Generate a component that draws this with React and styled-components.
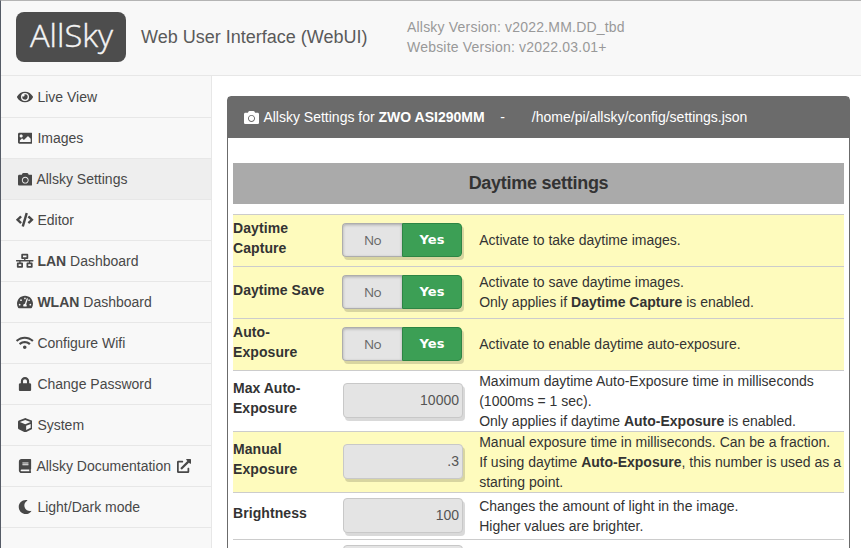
import React from "react";
import styled, { createGlobalStyle } from "styled-components";
import {
  FaEye, FaImage, FaCamera, FaCode, FaNetworkWired, FaTachometerAlt, FaWifi,
  FaLock, FaCube, FaBook, FaMoon, FaExternalLinkAlt,
} from "react-icons/fa";

const GlobalStyle = createGlobalStyle`
  *, *::before, *::after { box-sizing: border-box; }
  html, body { margin: 0; height: 548px; overflow: hidden; background: #fff; }
  body {
    font: 14px/20px "Liberation Sans", Arial, sans-serif;
    color: #333;
  }
`;

const Page = styled.div`
  width: 861px;
  height: 548px;
  overflow: hidden;
  display: flex;
  flex-direction: column;
  border-left: 1px solid #555b66;
  border-top: 1px solid #b4b4b4;
`;

const Header = styled.header`
  flex: 0 0 75px;
  display: flex;
  align-items: flex-start;
  padding-left: 15px;
  background: #f8f8f8;
  border-bottom: 1px solid #e7e7e7;
`;

const Logo = styled.svg`
  width: 110px;
  height: 50px;
  margin-top: 11px;
  display: block;
`;

const Title = styled.div`
  width: 281px;
  padding: 26px 0 0 15px;
  font-size: 18px;
  color: #5a5a5a;
  white-space: nowrap;
`;

const Versions = styled.div`
  padding-top: 16px;
  color: #999;
  letter-spacing: 0.2px;
  white-space: nowrap;
`;

const Body = styled.div`
  flex: 1;
  min-height: 0;
  display: flex;
`;

const Sidebar = styled.nav`
  flex: 0 0 211px;
  padding-top: 1px;
  background: #f8f8f8;
  border-right: 1px solid #e7e7e7;
`;

const NavItem = styled.a`
  display: flex;
  align-items: center;
  height: 41px;
  padding-left: 15px;
  color: #484848;
  background: ${(p) => (p.$active ? "#eee" : "transparent")};
  border-bottom: 1px solid #e7e7e7;
  white-space: nowrap;
  svg { display: block; }
`;

const NavIcon = styled.span`
  width: 18px;
  margin-right: ${(p) => (p.$tight ? 2.4 : 3.4)}px;
  display: flex;
  justify-content: center;
`;

const NavText = styled.span`
  margin-right: 5.6px;
`;

const Main = styled.main`
  flex: 1;
  padding: 20px 11px 0 15px;
`;

const Panel = styled.section`
  width: 623px;
  height: 500px;
  border: 1px solid #6b6b6b;
  border-radius: 4px;
`;

const PanelHeading = styled.div`
  height: 41px;
  display: flex;
  align-items: center;
  padding: 0 0 1px 16px;
  background: #6b6b6b;
  color: #fff;
  white-space: pre;
`;

const HeadingText = styled.span`
  margin-left: ${(p) => p.$gap}px;
`;

const PanelBody = styled.div`
  padding: 25px 5px 0;
`;

const SectionTitle = styled.h2`
  margin: 0 0 10px;
  height: 41px;
  line-height: 40px;
  font-size: 18px;
  letter-spacing: -0.27px;
  text-align: center;
  background: #aaa;
  color: #333;
`;

const Row = styled.div`
  display: grid;
  grid-template-columns: 109px 137px 1fr;
  align-items: center;
  height: ${(p) => p.$height}px;
  border-top: 1px solid #ccc;
  background: ${(p) => (p.$changed ? "#fefbbd" : "#fff")};
`;

const Label = styled.div`
  font-weight: bold;
  letter-spacing: ${(p) => (p.$wide ? 0.02 : 0.08)}px;
  padding-bottom: ${(p) => p.$lift}px;
  white-space: pre-line;
`;

const Description = styled.div`
  padding: 0 0 ${(p) => p.$lift}px 0.2px;
  white-space: nowrap;
`;

const Toggle = styled.div`
  display: flex;
  width: 120px;
  height: 34px;
  margin-bottom: 1px;
  border-radius: 4px;
  box-shadow: 2px 3px 0 rgba(0, 0, 0, 0.15);
  text-align: center;
`;

const ToggleNo = styled.span`
  width: 60px;
  border: 1px solid #adadad;
  border-right: 0;
  border-radius: 4px 0 0 4px;
  background: #e4e4e4;
  color: #666;
  box-shadow: inset 0 1px 3px rgba(0, 0, 0, 0.25);
  font: 13.5px/32px "Open Sans", sans-serif;
  letter-spacing: -0.6px;
`;

const ToggleYes = styled.span`
  width: 60px;
  border: 1px solid #2d8544;
  border-radius: 0 4px 4px 0;
  background: #3c9f55;
  color: #fff;
  font: bold 13px/32px "DejaVu Sans", sans-serif;
`;

const Field = styled.input`
  width: 120px;
  height: 35px;
  margin: 0 0 ${(p) => p.$lift}px 1px;
  padding: 0 3px 2px 8px;
  border: 1px solid #c8c8c8;
  border-radius: 4px;
  outline: none;
  background: #e4e4e4;
  box-shadow: 2px 3px 0 rgba(0, 0, 0, 0.15);
  font: 14px "Liberation Sans", Arial, sans-serif;
  color: #555;
  text-align: right;
`;

const NAV = [
  { icon: FaEye, text: "Live View" },
  { icon: FaImage, text: "Images", size: 14.5 },
  { icon: FaCamera, text: "Allsky Settings", size: 14.5, active: true, tight: true },
  { icon: FaCode, text: "Editor", size: 17.5 },
  { icon: FaNetworkWired, text: <><b>LAN</b> Dashboard</>, size: 17.5 },
  { icon: FaTachometerAlt, text: <><b>WLAN</b> Dashboard</> },
  { icon: FaWifi, text: "Configure Wifi", size: 17.5 },
  { icon: FaLock, text: "Change Password", size: 14 },
  { icon: FaCube, text: "System", size: 14.5 },
  { icon: FaBook, text: "Allsky Documentation", size: 14, tight: true, external: true },
  { icon: FaMoon, text: "Light/Dark mode", size: 14 },
];

const SETTINGS = [
  { label: "Daytime\nCapture", height: 52, changed: true, text: "Activate to take daytime images." },
  {
    label: "Daytime Save", height: 52, changed: true, wide: true,
    text: <>Activate to save daytime images.<br />Only applies if <b>Daytime Capture</b> is enabled.</>,
  },
  { label: "Auto-\nExposure", height: 52, changed: true, text: "Activate to enable daytime auto-exposure." },
  {
    label: "Max Auto-\nExposure", height: 61, value: "10000", wide: true,
    text: <>Maximum daytime Auto-Exposure time in milliseconds<br />(1000ms = 1 sec).<br />Only applies if daytime <b>Auto-Exposure</b> is enabled.</>,
  },
  {
    label: "Manual\nExposure", height: 61, value: ".3", changed: true,
    text: <>Manual exposure time in milliseconds. Can be a fraction.<br />If using daytime <b>Auto-Exposure</b>, this number is used as a<br />starting point.</>,
  },
  {
    label: "Brightness", height: 47, value: "100",
    text: <>Changes the amount of light in the image.<br />Higher values are brighter.</>,
  },
  { label: "", height: 47, value: "", text: "" },
];

function YesNo() {
  return (
    <Toggle>
      <ToggleNo>No</ToggleNo>
      <ToggleYes>Yes</ToggleYes>
    </Toggle>
  );
}

export default function App() {
  return (
    <>
      <GlobalStyle />
      <Page>
        <Header>
          <Logo viewBox="0 0 110 50">
            <rect width="110" height="50" rx="8" fill="#4d4d4d" />
            <text
              x="14" y="35" fill="#f4f4f4" stroke="#f4f4f4" strokeWidth="0.4"
              fontFamily="'Open Sans', sans-serif" fontWeight="300" fontSize="32"
              textLength="83" lengthAdjust="spacingAndGlyphs"
            >
              AllSky
            </text>
          </Logo>
          <Title>Web User Interface (WebUI)</Title>
          <Versions>
            Allsky Version: v2022.MM.DD_tbd<br />
            Website Version: v2022.03.01+
          </Versions>
        </Header>
        <Body>
          <Sidebar>
            {NAV.map(({ icon: Icon, text, size = 16, active, tight, external }, i) => (
              <NavItem key={i} $active={active}>
                <NavIcon $tight={tight}><Icon size={size} /></NavIcon>
                <NavText>{text}</NavText>
                {external && <FaExternalLinkAlt size={14} />}
              </NavItem>
            ))}
          </Sidebar>
          <Main>
            <Panel>
              <PanelHeading>
                <FaCamera size={15} />
                <HeadingText $gap={4.4}>Allsky Settings for <b>ZWO ASI290MM</b></HeadingText>
                <HeadingText $gap={15.6}>-</HeadingText>
                <HeadingText $gap={27}>/home/pi/allsky/config/settings.json</HeadingText>
              </PanelHeading>
              <PanelBody>
                <SectionTitle>Daytime settings</SectionTitle>
                {SETTINGS.map(({ label, height, changed, value, text, wide }, i) => (
                  <Row key={i} $height={height} $changed={changed}>
                    <Label $lift={value === undefined ? 5 : 6} $wide={wide}>{label}</Label>
                    {value === undefined
                      ? <YesNo />
                      : <Field readOnly value={value} $lift={1} />}
                    <Description $lift={height === 52 ? 1 : 0}>{text}</Description>
                  </Row>
                ))}
              </PanelBody>
            </Panel>
          </Main>
        </Body>
      </Page>
    </>
  );
}
